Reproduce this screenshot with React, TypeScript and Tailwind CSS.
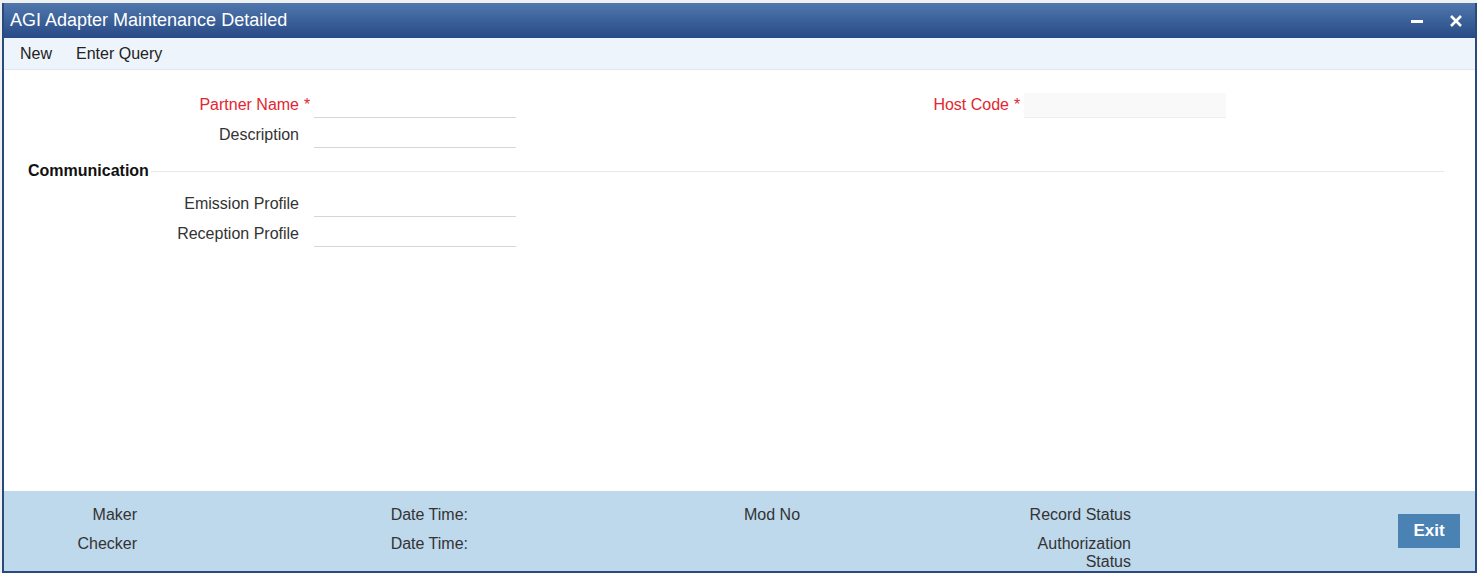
import React from 'react';

const font = { fontFamily: '"Liberation Sans", Arial, sans-serif' };

function Field({ label, required, filled }: { label: string; required?: boolean; filled?: boolean }) {
    return (
        <div className="flex items-center h-[30px]">
            <div className={`w-[295px] text-right text-[16px] ${required ? 'text-[#e3262f]' : 'text-[#333]'}`}>{label}</div>
            <div className="w-[15px] pl-[5px] text-[16px] text-[#e3262f]">{required ? '*' : ''}</div>
            <div className={`w-[202px] h-[25px] border-b border-[#d6d6d6] ${filled ? 'bg-[#f9f9f9] border-[#eeeeee]' : ''}`} />
        </div>
    );
}

export default function App() {
    return (
        <div className="w-[1477px] h-[573px] bg-[#eef0f2] pt-[3px] pl-[2px] overflow-hidden" style={font}>
            <div className="w-[1475px] h-[570px] flex flex-col border-x-2 border-b-2 border-[#2a4a7d] bg-white">
                <div className="h-[35px] flex items-center justify-between pl-[6px] pr-2 bg-gradient-to-b from-[#5078ad] to-[#284a86]">
                    <span className="text-white text-[18px]">AGI Adapter Maintenance Detailed</span>
                    <div className="flex items-center gap-[26px] pr-[4px]">
                        <div className="w-[12px] h-[3px] bg-white mt-[2px]" />
                        <svg width="14" height="14" viewBox="0 0 14 14" className="mt-[1px]">
                            <path d="M2 2 L12 12 M12 2 L2 12" stroke="white" strokeWidth="2.6" />
                        </svg>
                    </div>
                </div>
                <div className="h-[32px] flex items-center gap-6 px-4 pt-[1px] bg-[#eef4fc] border-b border-[#e2e8ee] text-[16px] text-[#222]">
                    <span>New</span>
                    <span>Enter Query</span>
                </div>
                <div className="flex-1 pt-[20px]">
                    <div className="grid grid-cols-[710px_710px]">
                        <div className="flex flex-col">
                            <Field label="Partner Name" required />
                            <Field label="Description" />
                        </div>
                        <div>
                            <Field label="Host Code" required filled />
                        </div>
                    </div>
                    <div className="flex items-center ml-[24px] mr-[31px] mt-[9px] mb-[6px]">
                        <span className="text-[16px] font-bold text-[#111]">Communication</span>
                        <div className="flex-1 border-t border-[#e8e8e8] ml-[2px]" />
                    </div>
                    <div className="flex flex-col">
                        <Field label="Emission Profile" />
                        <Field label="Reception Profile" />
                    </div>
                </div>
                <div className="h-[80px] bg-[#bed8ec] flex text-[16px] leading-[18px] text-[#333] pt-[15px]">
                    <div className="w-[133px] shrink-0 flex flex-col items-end gap-[11px]">
                        <span>Maker</span>
                        <span>Checker</span>
                    </div>
                    <div className="w-[331px] shrink-0 flex flex-col items-end gap-[11px]">
                        <span>Date Time:</span>
                        <span>Date Time:</span>
                    </div>
                    <div className="w-[532px] shrink-0 pl-[276px]">
                        <span>Mod No</span>
                    </div>
                    <div className="w-[131px] shrink-0 flex flex-col items-end text-right">
                        <span>Record Status</span>
                        <span className="mt-[11px] w-[100px]">Authorization Status</span>
                    </div>
                    <div className="shrink-0 pl-[267px] pt-[8px]">
                        <button className="w-[62px] h-[34px] bg-[#4a82b3] text-white font-bold text-[17px]">Exit</button>
                    </div>
                </div>
            </div>
        </div>
    );
}
